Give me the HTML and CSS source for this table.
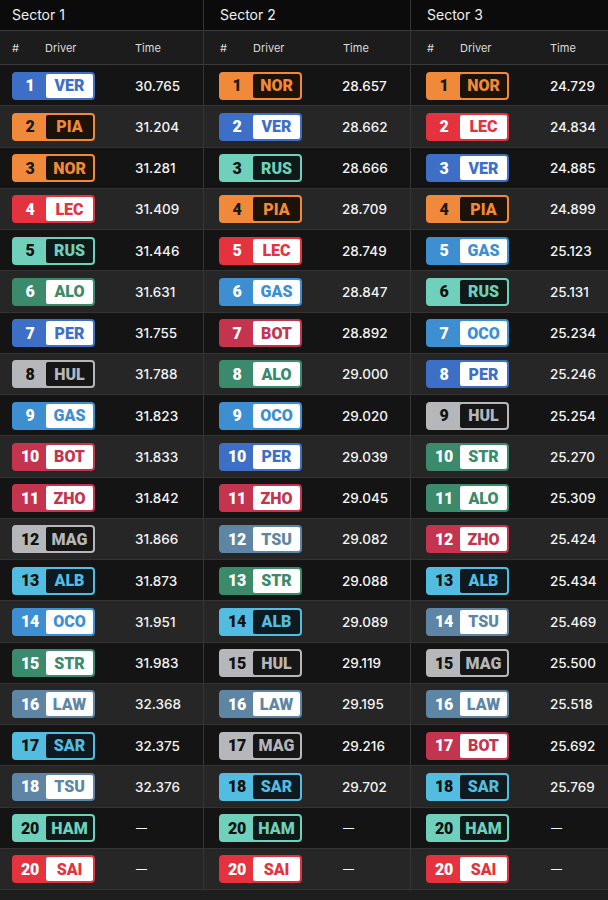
FILE: index.html
```html
<!DOCTYPE html>
<html>
<head>
<meta charset="utf-8">
<link rel="stylesheet" href="styles.css">
</head>
<body>
<div class="board" id="board"></div>
<script>
const data = [
  ["Sector 1", [[1,"VER","30.765"],[2,"PIA","31.204"],[3,"NOR","31.281"],[4,"LEC","31.409"],[5,"RUS","31.446"],[6,"ALO","31.631"],[7,"PER","31.755"],[8,"HUL","31.788"],[9,"GAS","31.823"],[10,"BOT","31.833"],[11,"ZHO","31.842"],[12,"MAG","31.866"],[13,"ALB","31.873"],[14,"OCO","31.951"],[15,"STR","31.983"],[16,"LAW","32.368"],[17,"SAR","32.375"],[18,"TSU","32.376"],[20,"HAM",null],[20,"SAI",null]]],
  ["Sector 2", [[1,"NOR","28.657"],[2,"VER","28.662"],[3,"RUS","28.666"],[4,"PIA","28.709"],[5,"LEC","28.749"],[6,"GAS","28.847"],[7,"BOT","28.892"],[8,"ALO","29.000"],[9,"OCO","29.020"],[10,"PER","29.039"],[11,"ZHO","29.045"],[12,"TSU","29.082"],[13,"STR","29.088"],[14,"ALB","29.089"],[15,"HUL","29.119"],[16,"LAW","29.195"],[17,"MAG","29.216"],[18,"SAR","29.702"],[20,"HAM",null],[20,"SAI",null]]],
  ["Sector 3", [[1,"NOR","24.729"],[2,"LEC","24.834"],[3,"VER","24.885"],[4,"PIA","24.899"],[5,"GAS","25.123"],[6,"RUS","25.131"],[7,"OCO","25.234"],[8,"PER","25.246"],[9,"HUL","25.254"],[10,"STR","25.270"],[11,"ALO","25.309"],[12,"ZHO","25.424"],[13,"ALB","25.434"],[14,"TSU","25.469"],[15,"MAG","25.500"],[16,"LAW","25.518"],[17,"BOT","25.692"],[18,"SAR","25.769"],[20,"HAM",null],[20,"SAI",null]]]
];
const team = {VER:"rbr",PER:"rbr",NOR:"mcl",PIA:"mcl",LEC:"fer",SAI:"fer",RUS:"mer",HAM:"mer",ALO:"amr",STR:"amr",HUL:"haa",MAG:"haa",GAS:"alp",OCO:"alp",BOT:"sau",ZHO:"sau",ALB:"wil",SAR:"wil",TSU:"rb",LAW:"rb"};
const board = document.getElementById("board");
data.forEach((sec, i) => {
  const col = document.createElement("div");
  col.className = "col col-" + (i + 1);
  let html = '<div class="sec-head">' + sec[0] + '</div>';
  html += '<div class="col-head"><span>#</span><span>Driver</span><span>Time</span></div>';
  sec[1].forEach((r, j) => {
    html += '<div class="row ' + (j % 2 ? 'even' : 'odd') + '">' +
      '<div class="badge t-' + team[r[1]] + '"><span class="num">' + r[0] + '</span><span class="code">' + r[1] + '</span></div>' +
      '<span class="time' + (r[2] ? '' : ' dash') + '">' + (r[2] || '—') + '</span></div>';
  });
  col.innerHTML = html;
  board.appendChild(col);
});
</script>
</body>
</html>
```
FILE: styles.css
```css
html, body {
  margin: 0;
  padding: 0;
  background: #1e1e1e;
}
body {
  font-family: Inter, "Noto Sans", sans-serif;
  color: #f2f2f2;
  width: 608px;
  height: 900px;
  overflow: hidden;
}
.board {
  display: grid;
  grid-template-columns: 204px 207px 197px;
}
.col {
  display: flex;
  flex-direction: column;
  --pl: 15px;
}
.col-1 { --pl: 12px; }
.col-1, .col-2 { border-right: 1px solid #353535; box-sizing: border-box; }
.sec-head {
  height: 31px;
  box-sizing: border-box;
  border-bottom: 1px solid #3a3a3a;
  background: #0b0b0b;
  padding-left: var(--pl);
  padding-bottom: 2px;
  display: flex;
  align-items: center;
  font-size: 14px;
  color: #f0f0f0;
}
.col-2 .sec-head, .col-3 .sec-head { padding-left: 16px; }
.col-head {
  height: 34px;
  box-sizing: border-box;
  border-bottom: 1px solid #3a3a3a;
  background: #1c1c1c;
  padding-left: var(--pl);
  display: grid;
  grid-template-columns: 33px 90px auto;
  align-items: center;
  font-size: 11px;
  color: #dcdcdc;
}
.col-2 .col-head, .col-3 .col-head { padding-left: 16px; }
.row {
  height: 41.25px;
  box-sizing: border-box;
  border-bottom: 1px solid #333;
  display: flex;
  align-items: center;
  padding-left: var(--pl);
  padding-top: 1px;
}
.row.odd { background: #141414; }
.row.even { background: #262626; }
.badge {
  --c: #888;
  --n: #fff;
  --in: #fff;
  width: 83px;
  height: 28px;
  box-sizing: border-box;
  border: 2px solid var(--c);
  background: var(--c);
  border-radius: 4px;
  display: flex;
  font-family: Roboto, "Liberation Sans", sans-serif;
  font-weight: 900;
  font-size: 16px;
}
.num {
  width: 32px;
  display: flex;
  align-items: center;
  justify-content: center;
  color: var(--n);
  letter-spacing: -0.3px;
}
.code {
  flex: 1;
  background: var(--in);
  color: var(--c);
  border-radius: 2px;
  display: flex;
  align-items: center;
  justify-content: center;
}
.time {
  margin-left: 40px;
  font-size: 13.5px;
  font-weight: 500;
  color: #f4f4f4;
}
.col-3 .time { margin-left: 41px; }
.time.dash {
  margin-left: 41px;
  font-size: 11px;
}
.col-3 .time.dash { margin-left: 42px; }

.t-rbr { --c: #3d6fc6; }
.t-mcl { --c: #f08a3a; --n: #1a1a1a; --in: #1c1208; }
.t-fer { --c: #e5323f; }
.t-mer { --c: #6fd0bb; --n: #111; --in: #0f1a18; }
.t-amr { --c: #3b8a6c; }
.t-haa { --c: #b5b7ba; --n: #111; --in: #161616; }
.t-alp { --c: #3d8fd1; }
.t-sau { --c: #c5344e; }
.t-wil { --c: #52bde0; --n: #111; --in: #0e1a1f; }
.t-rb { --c: #5e86a4; }
```
